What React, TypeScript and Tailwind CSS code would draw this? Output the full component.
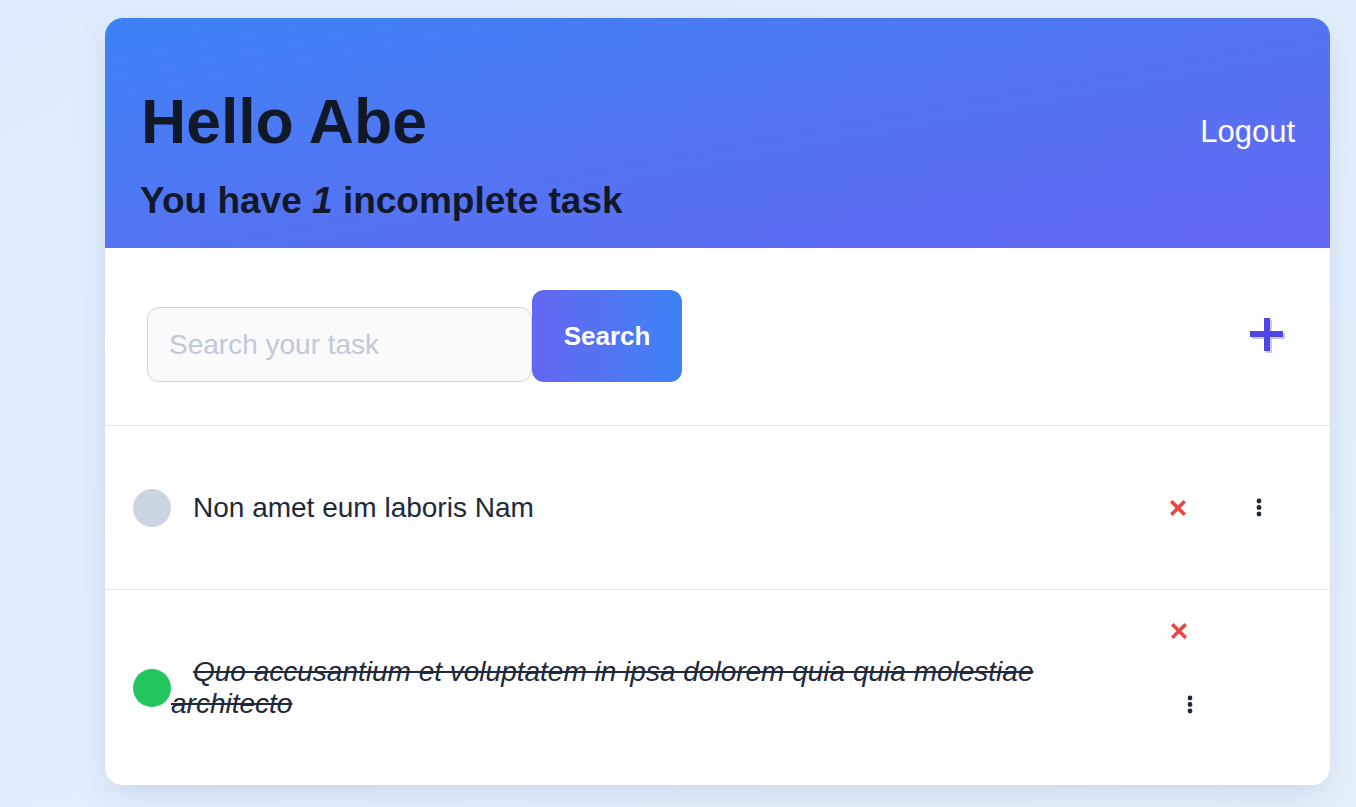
import React from "react";

function XIcon() {
  return (
    <svg width="16" height="16" viewBox="0 0 16 16" aria-hidden="true">
      <path d="M2.5 2.5 L13.5 13.5 M13.5 2.5 L2.5 13.5" stroke="#ef4444" strokeWidth="3.6" strokeLinecap="square" fill="none" />
    </svg>
  );
}

function Dots() {
  return (
    <svg width="6" height="19" viewBox="0 0 6 19" aria-hidden="true">
      <circle cx="3" cy="3" r="2.4" fill="#1e293b" />
      <circle cx="3" cy="9.5" r="2.4" fill="#1e293b" />
      <circle cx="3" cy="16" r="2.4" fill="#1e293b" />
    </svg>
  );
}

function Plus() {
  return (
    <svg width="38" height="38" viewBox="0 0 38 38" aria-hidden="true">
      <rect x="2" y="15" width="33" height="6" fill="#c3c9f7" />
      <rect x="16" y="2" width="6" height="33" fill="#c3c9f7" />
      <rect x="0" y="13" width="33" height="6" fill="#4f46e5" />
      <rect x="14" y="0" width="6" height="33" fill="#4f46e5" />
    </svg>
  );
}

export default function App() {
  return (
    <div
      className="w-full h-[807px] overflow-hidden bg-linear-to-br from-[#dfecfd] to-[#e6f0fa] pt-[18px]"
      style={{ fontFamily: '"Liberation Sans", Arial, sans-serif' }}
    >
      <div className="ml-[105px] w-[1225px] h-[767px] bg-white rounded-[18px] shadow-[0_10px_30px_-5px_rgba(100,130,180,0.25)] overflow-hidden">
        {/* Header */}
        <div className="h-[230px] bg-linear-to-br from-[#3b82f6] to-[#6366f1] flex justify-between items-start pl-[35px] pr-[35px] pt-[72px]">
          <div>
            <h1 className="text-[62.5px] leading-none font-bold text-[#111827] ml-[1px]">Hello Abe</h1>
            <p className="mt-[26px] text-[37px] leading-[43px] font-bold text-[#111827]">
              You have <em>1</em> incomplete task
            </p>
          </div>
          <button className="mt-[26px] text-[31px] leading-none text-white">Logout</button>
        </div>

        {/* Search */}
        <div className="flex items-end justify-between pl-[42px] pr-[42px] pt-[42px] pb-[43px] border-b border-[#e5e7eb]">
          <div className="flex items-end">
            <input
              className="w-[385px] h-[75px] rounded-xl border border-[#cbd5e1] bg-[#f8fafc] px-[21px] text-[28px] text-slate-700 placeholder:text-[#c1c9d6] outline-none"
              placeholder="Search your task"
            />
            <button className="w-[150px] h-[92px] rounded-xl bg-linear-to-r from-[#6366f1] to-[#3b82f6] text-white font-bold text-[26px]">
              Search
            </button>
          </div>
          <div className="mb-[26px]">
            <Plus />
          </div>
        </div>

        {/* Row 1 */}
        <div className="h-[164px] flex items-center pl-[28px] pr-[68px] border-b border-[#e5e7eb]">
          <div className="w-[38px] h-[38px] rounded-full bg-[#cbd5e1] shrink-0" />
          <p className="flex-1 text-[28px] leading-[32px] text-[#1e293b]">
            <span className="ml-[22px]">Non amet eum laboris Nam</span>
          </p>
          <div className="flex items-center gap-[70px]">
            <button className="flex"><XIcon /></button>
            <button className="flex"><Dots /></button>
          </div>
        </div>

        {/* Row 2 */}
        <div className="h-[195px] flex items-center pl-[28px]">
          <div className="w-[38px] h-[38px] rounded-full bg-[#22c55e] shrink-0" />
          <p className="w-[900px] text-[28px] leading-[32px] text-[#1e293b] italic line-through">
            <span className="ml-[22px]">Quo accusantium et voluptatem in ipsa dolorem quia quia molestiae architecto</span>
          </p>
          <div className="self-start mt-[33px] ml-[100px] flex flex-col items-start">
            <button className="flex"><XIcon /></button>
            <button className="flex ml-[16px] mt-[56px]"><Dots /></button>
          </div>
        </div>
      </div>
    </div>
  );
}
